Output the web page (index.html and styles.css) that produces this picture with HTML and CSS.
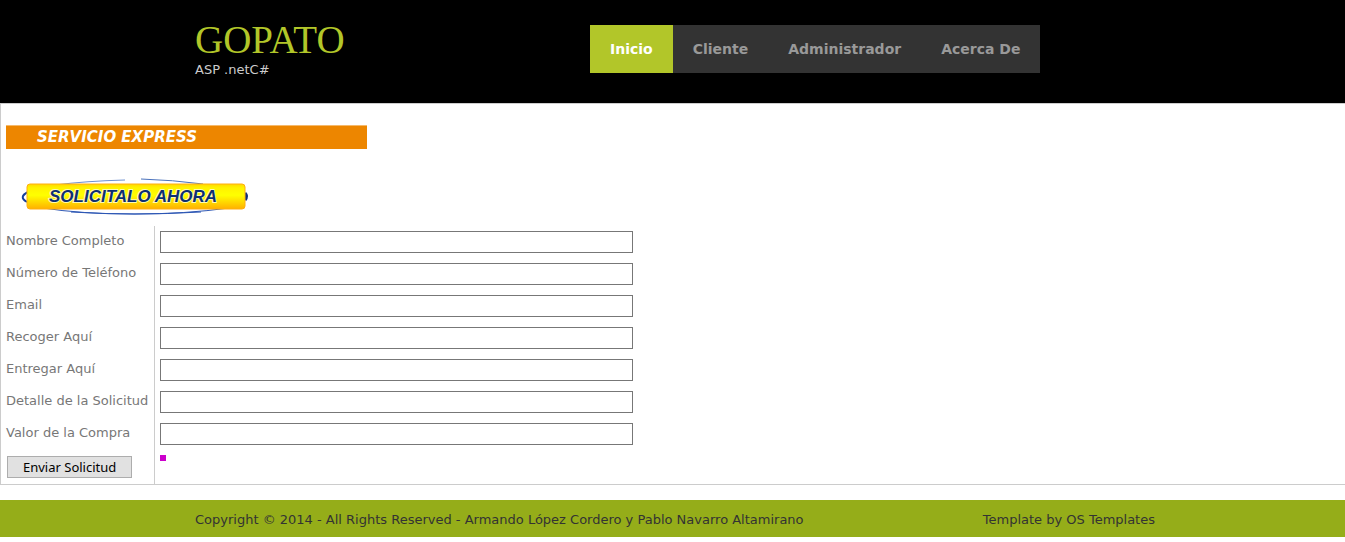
FILE: index.html
```html
<!DOCTYPE html>
<html lang="es">

<head>
  <meta charset="utf-8">
  <title>GOPATO</title>
  <link rel="stylesheet" href="styles.css">
</head>

<body>

  <header class="header">
    <div class="wrapper header-inner">
      <div class="brand">
        <h1><a href="#">GOPATO</a></h1>
        <p>ASP .netC#</p>
      </div>
      <nav class="topnav">
        <ul>
          <li class="active"><a href="#">Inicio</a></li>
          <li><a href="#">Cliente</a></li>
          <li><a href="#">Administrador</a></li>
          <li><a href="#">Acerca De</a></li>
        </ul>
      </nav>
    </div>
  </header>

  <form class="request">
    <div class="request-head">
      <h2 class="banner">SERVICIO EXPRESS</h2>
      <svg class="promo" width="232" height="42" viewBox="0 0 232 42" role="img" aria-label="SOLICITALO AHORA">
        <defs>
          <linearGradient id="gold" x1="0" y1="0" x2="0" y2="1">
            <stop offset="0" stop-color="#ffd800" />
            <stop offset="0.15" stop-color="#fff200" />
            <stop offset="0.45" stop-color="#ffff00" />
            <stop offset="1" stop-color="#ffb000" />
          </linearGradient>
        </defs>
        <path d="M34 8 Q65 4 104 3" fill="none" stroke="#6d8fd0" stroke-width="1" />
        <path d="M120 2 Q152 3 182 7" fill="none" stroke="#4a72bc" stroke-width="1" />
        <path d="M22 31 Q60 37 113 37 Q165 37 208 31" fill="none" stroke="#2c56b4" stroke-width="1" />
        <path d="M50 35 Q113 39 180 35" fill="none" stroke="#2c56b4" stroke-width="1" />
        <path d="M7 15 Q-3 20 6 25" fill="none" stroke="#153f9c" stroke-width="2" />
        <path d="M224 16 Q227 19 224 23" fill="none" stroke="#102f7c" stroke-width="3" />
        <rect x="6" y="7" width="218" height="25" rx="3" fill="url(#gold)" stroke="#ffae10" stroke-width="1" />
        <text x="28" y="25" class="promo-text">SOLICITALO AHORA</text>
      </svg>
    </div>

    <div class="fields">
      <label for="nombre">Nombre Completo</label>
      <div class="field"><input type="text" id="nombre"></div>

      <label for="telefono">Número de Teléfono</label>
      <div class="field"><input type="text" id="telefono"></div>

      <label for="email">Email</label>
      <div class="field"><input type="text" id="email"></div>

      <label for="recoger">Recoger Aquí</label>
      <div class="field"><input type="text" id="recoger"></div>

      <label for="entregar">Entregar Aquí</label>
      <div class="field"><input type="text" id="entregar"></div>

      <label for="detalle">Detalle de la Solicitud</label>
      <div class="field"><input type="text" id="detalle"></div>

      <label for="valor">Valor de la Compra</label>
      <div class="field"><input type="text" id="valor"></div>

      <div class="submit"><button type="button">Enviar Solicitud</button></div>
      <div class="field"><span class="status"></span></div>
    </div>
  </form>

  <footer class="footer">
    <div class="wrapper footer-inner">
      <p>Copyright © 2014 - All Rights Reserved - Armando López Cordero y Pablo Navarro Altamirano</p>
      <p>Template by <a href="#">OS Templates</a></p>
    </div>
  </footer>

</body>

</html>
```

FILE: styles.css
```css
* {
  box-sizing: border-box;
}

html {
  overflow-x: hidden;
}

body {
  width: calc(100% + 5px);
  margin: 0;
  background: #fff;
  color: #777;
  font: 13px/20px Verdana, "DejaVu Sans", sans-serif;
}

h1, h2, p, ul {
  margin: 0;
  padding: 0;
}

a {
  color: inherit;
  text-decoration: none;
}

.wrapper {
  max-width: 960px;
  margin: 0 auto;
}

/* header */
.header {
  background: #000;
  color: #ccc;
}

.header-inner {
  display: flex;
  align-items: flex-start;
  padding: 20px 0 23px;
}

.brand {
  width: 395px;
}

.brand h1 {
  color: #b2c629;
  font: 39px/40px "Liberation Serif", serif;
}

.topnav {
  margin-top: 5px;
}

.topnav ul {
  display: flex;
  list-style: none;
  background: #333;
}

.topnav a {
  display: block;
  padding: 14px 20px;
  color: #999;
  font-size: 14px;
  font-weight: bold;
}

.topnav .active a {
  background: #b2c629;
  color: #fff;
}

/* request form */
.request {
  border: 1px solid #ccc;
}

.request-head {
  padding: 21px 5px 7px;
}

.banner {
  max-width: 361px;
  padding: 0 31px;
  border-top: 1px solid #f5b96b;
  background: #ed8600;
  color: #fff;
  font: italic bold 15px/23px "DejaVu Sans", sans-serif;
}

.promo {
  display: block;
  margin: 28px 0 0 15px;
}

.promo-text {
  fill: #0d2f73;
  stroke: #fffbb0;
  stroke-width: 2px;
  paint-order: stroke;
  font: italic bold 17px "Liberation Sans", sans-serif;
}

.fields {
  display: grid;
  grid-template-columns: max-content 1fr;
}

.fields label,
.submit {
  padding: 5px 6px 5px 5px;
}

.field {
  padding: 5px;
  border-left: 1px solid #ccc;
}

.field input {
  display: block;
  width: 100%;
  max-width: 473px;
  height: 22px;
  padding: 1px 3px;
  border: 1px solid #777;
  background: #fff;
  font: inherit;
}

.submit button {
  display: block;
  height: 22px;
  margin: 1px;
  padding: 0 15px;
  border: 1px solid #adadad;
  background: #e1e1e1;
  color: #000;
  font: 13px "Noto Sans", sans-serif;
}

.status {
  display: block;
  width: 6px;
  height: 6px;
  background: #c0c;
}

/* footer */
.footer {
  margin-top: 15px;
  background: #95ad19;
  color: #333;
}

.footer-inner {
  display: flex;
  justify-content: space-between;
  padding: 10px 0 7px;
}
```
